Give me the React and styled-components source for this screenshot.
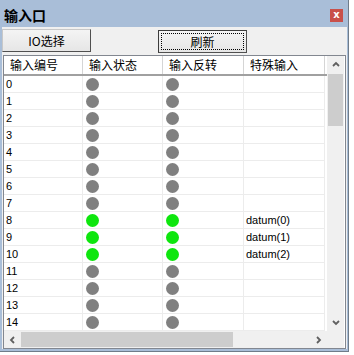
import styled, { createGlobalStyle } from "styled-components";

const GlobalStyle = createGlobalStyle`
  html, body {
    margin: 0;
    padding: 0;
    background: #ffffff;
  }
  body {
    font-family: "Liberation Sans", "Noto Sans CJK SC", sans-serif;
  }
`;

const rows = Array.from({ length: 15 }, (_, i) => ({
  id: i,
  on: i >= 8 && i <= 10,
  special: i >= 8 && i <= 10 ? `datum(${i - 8})` : "",
}));

const Chevron = ({ dir }) => {
  const pts = {
    up: "1,5 4,2 7,5",
    down: "1,2 4,5 7,2",
    left: "5,1 2,4 5,7",
    right: "2,1 5,4 2,7",
  }[dir];
  return (
    <svg width="8" height="8" viewBox="0 0 8 8">
      <polyline points={pts} fill="none" stroke="#606060" strokeWidth="1.8" />
    </svg>
  );
};

const App = () => {
  return (
    <>
      <GlobalStyle />
      <Window>
        <TitleBar>
          <Title>输入口</Title>
          <CloseButton>x</CloseButton>
        </TitleBar>
        <Body>
          <Toolbar>
            <Button>IO选择</Button>
            <Button $default>
              <Focus>刷新</Focus>
            </Button>
          </Toolbar>
          <ListView>
            <ListContent>
              <Header>
                <HeaderCell>输入编号</HeaderCell>
                <HeaderCell>输入状态</HeaderCell>
                <HeaderCell>输入反转</HeaderCell>
                <HeaderCell>特殊输入</HeaderCell>
              </Header>
              {rows.map((r) => (
                <Row key={r.id}>
                  <Cell>{r.id}</Cell>
                  <Cell>
                    <Dot $on={r.on} />
                  </Cell>
                  <Cell>
                    <Dot $on={r.on} />
                  </Cell>
                  <Cell>{r.special}</Cell>
                </Row>
              ))}
            </ListContent>
            <VScroll>
              <ArrowBox>
                <Chevron dir="up" />
              </ArrowBox>
              <VTrack>
                <VThumb />
              </VTrack>
              <ArrowBox>
                <Chevron dir="down" />
              </ArrowBox>
            </VScroll>
            <HScroll>
              <ArrowBox>
                <Chevron dir="left" />
              </ArrowBox>
              <HTrack>
                <HThumb />
              </HTrack>
              <ArrowBox>
                <Chevron dir="right" />
              </ArrowBox>
            </HScroll>
            <Corner />
          </ListView>
        </Body>
      </Window>
    </>
  );
};

export default App;

const Window = styled.div`
  width: 348px;
  height: 351px;
  display: flex;
  flex-direction: column;
  background: #a9bed8;
  border-right: 1px solid #6f7c8a;
  border-bottom: 1px solid #6f7c8a;
`;

const TitleBar = styled.div`
  height: 27px;
  display: flex;
  align-items: center;
  justify-content: space-between;
  padding: 0 4px 0 4px;
`;

const Title = styled.div`
  font-family: "Noto Sans CJK SC", sans-serif;
  font-size: 14px;
  font-weight: 700;
  color: #000;
  padding-top: 2px;
`;

const CloseButton = styled.div`
  width: 13px;
  height: 13px;
  background: #c9504a;
  color: #fff;
  font-family: "DejaVu Sans", sans-serif;
  font-size: 10px;
  font-weight: 700;
  line-height: 11px;
  text-align: center;
  margin-top: 4px;
  margin-right: 1px;
`;

const Body = styled.div`
  flex: 1;
  display: flex;
  flex-direction: column;
  background: #f0f0f0;
  margin: 0 1px 2px 2px;
`;

const Toolbar = styled.div`
  height: 28px;
  display: flex;
  align-items: flex-start;
  gap: 67px;
  padding-top: 2px;
  box-sizing: border-box;
`;

const Button = styled.div`
  width: 89px;
  height: 23px;
  box-sizing: border-box;
  display: flex;
  align-items: center;
  justify-content: center;
  font-family: "Noto Sans CJK SC", sans-serif;
  font-size: 12px;
  color: #000;
  background: linear-gradient(#f4f4f4, #e6e6e6);
  border: 1px solid ${(p) => (p.$default ? "#3c3c3c" : "#c8c8c8")};
  border-right-color: #505050;
  border-bottom-color: #505050;
  margin-top: ${(p) => (p.$default ? "1px" : "0")};
  padding: 2px;
`;

const Focus = styled.span`
  flex: 1;
  align-self: stretch;
  display: flex;
  align-items: center;
  justify-content: center;
  border: 1px dotted #000;
`;

const ListView = styled.div`
  margin: 0 1px 0 1px;
  display: grid;
  grid-template-columns: 323px 17px;
  grid-template-rows: 275px 17px;
  border: 1px solid #828790;
  background: #fff;
`;

const ListContent = styled.div`
  overflow: hidden;
  background: #fff;
`;

const Header = styled.div`
  height: 20px;
  display: grid;
  grid-template-columns: 79px 80px 81px 81px;
  border-bottom: 2px solid #a0a0a0;
  box-sizing: border-box;
  width: 323px;
`;

const HeaderCell = styled.div`
  font-family: "Noto Sans CJK SC", sans-serif;
  font-size: 12px;
  line-height: 17px;
  padding-left: 6px;
  border-right: 1px solid #d5d5d5;
  color: #000;
`;

const Row = styled.div`
  height: 17px;
  box-sizing: border-box;
  display: grid;
  grid-template-columns: 79px 80px 81px 81px;
  border-bottom: 1px solid #ececec;
  width: 321px;
`;

const Cell = styled.div`
  display: flex;
  align-items: center;
  padding-left: 2px;
  font-size: 11px;
  color: #000;
  border-right: 1px solid #ececec;
`;

const Dot = styled.span`
  width: 13px;
  height: 13px;
  border-radius: 50%;
  margin-left: 1px;
  background: ${(p) => (p.$on ? "#0ee60e" : "#808080")};
`;

const VScroll = styled.div`
  display: flex;
  flex-direction: column;
  background: #f0f0f0;
`;

const ArrowBox = styled.div`
  width: 17px;
  height: 17px;
  flex: none;
  display: flex;
  align-items: center;
  justify-content: center;
`;

const VTrack = styled.div`
  flex: 1;
  padding: 1px 1px;
`;

const VThumb = styled.div`
  height: 52px;
  background: #cdcdcd;
`;

const HScroll = styled.div`
  display: flex;
  background: #f0f0f0;
`;

const HTrack = styled.div`
  flex: 1;
  padding: 1px 0;
  display: flex;
`;

const HThumb = styled.div`
  width: 212px;
  background: #cdcdcd;
`;

const Corner = styled.div`
  background: #f0f0f0;
`;
